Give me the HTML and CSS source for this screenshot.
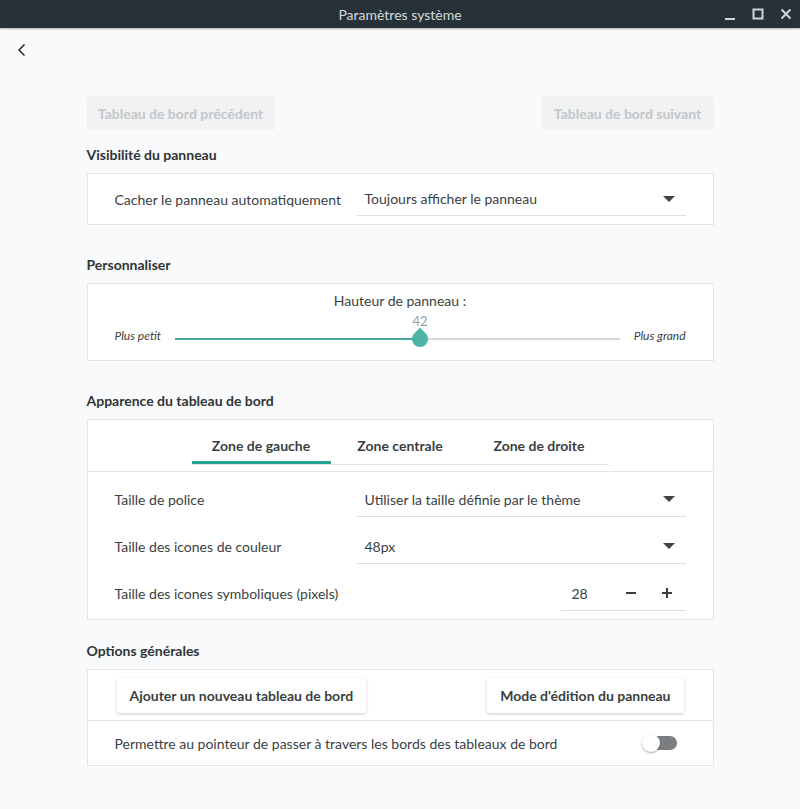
FILE: index.html
```html
<!DOCTYPE html>
<html lang="fr">
<head>
    <meta charset="UTF-8">
    <title>Paramètres système</title>
    <link rel="stylesheet" href="styles.css">
</head>
<body>
    <div class="titlebar">
        <span class="title">Paramètres système</span>
        <div class="win-buttons">
            <svg width="14" height="14" viewBox="0 0 14 14"><path d="M2 12h10" stroke="#cfd6da" stroke-width="2"/></svg>
            <svg width="14" height="14" viewBox="0 0 14 14"><rect x="2.5" y="2.5" width="9" height="9" fill="none" stroke="#cfd6da" stroke-width="2"/></svg>
            <svg width="14" height="14" viewBox="0 0 14 14"><path d="M2.5 2.5l9 9M11.5 2.5l-9 9" stroke="#cfd6da" stroke-width="2"/></svg>
        </div>
    </div>

    <div class="headerbar">
        <svg class="back" width="12" height="16" viewBox="0 0 12 16"><path d="M8.5 2.5L3 8l5.5 5.5" fill="none" stroke="#2f3437" stroke-width="1.6"/></svg>
    </div>

    <main class="content">
        <div class="nav-row">
            <button class="nav-btn prev" disabled>Tableau de bord précédent</button>
            <button class="nav-btn next" disabled>Tableau de bord suivant</button>
        </div>

        <h3 class="section-title first">Visibilité du panneau</h3>
        <div class="card">
            <div class="row row-combo">
                <span class="label">Cacher le panneau automatiquement</span>
                <div class="combo">
                    <span>Toujours afficher le panneau</span>
                    <span class="arrow"></span>
                </div>
            </div>
        </div>

        <h3 class="section-title">Personnaliser</h3>
        <div class="card slider-card">
            <div class="slider-title">Hauteur de panneau :</div>
            <div class="slider-row">
                <span class="hint">Plus petit</span>
                <div class="slider">
                    <div class="track"></div>
                    <div class="fill" style="width: 245px;"></div>
                    <span class="value" style="left: 245px;">42</span>
                    <div class="thumb" style="left: 245px;"></div>
                </div>
                <span class="hint">Plus grand</span>
            </div>
        </div>

        <h3 class="section-title">Apparence du tableau de bord</h3>
        <div class="card">
            <div class="tabs-bar">
                <div class="tabs">
                    <div class="tab active">Zone de gauche</div>
                    <div class="tab">Zone centrale</div>
                    <div class="tab">Zone de droite</div>
                </div>
            </div>
            <div class="rows">
                <div class="row">
                    <span class="label">Taille de police</span>
                    <div class="combo">
                        <span>Utiliser la taille définie par le thème</span>
                        <span class="arrow"></span>
                    </div>
                </div>
                <div class="row">
                    <span class="label">Taille des icones de couleur</span>
                    <div class="combo">
                        <span>48px</span>
                        <span class="arrow"></span>
                    </div>
                </div>
                <div class="row">
                    <span class="label">Taille des icones symboliques (pixels)</span>
                    <div class="spin">
                        <span class="spin-value">28</span>
                        <span class="spin-btn">
                            <svg width="12" height="12" viewBox="0 0 12 12"><path d="M1 6h10" stroke="#3a3f43" stroke-width="2"/></svg>
                        </span>
                        <span class="spin-btn">
                            <svg width="12" height="12" viewBox="0 0 12 12"><path d="M1 6h10M6 1v10" stroke="#3a3f43" stroke-width="2"/></svg>
                        </span>
                    </div>
                </div>
            </div>
        </div>

        <h3 class="section-title tight">Options générales</h3>
        <div class="card">
            <div class="buttons-row">
                <button class="btn">Ajouter un nouveau tableau de bord</button>
                <button class="btn">Mode d'édition du panneau</button>
            </div>
            <div class="row toggle-row">
                <span class="label">Permettre au pointeur de passer à travers les bords des tableaux de bord</span>
                <span class="switch"><span class="knob"></span></span>
            </div>
        </div>
    </main>
</body>
</html>
```

FILE: styles.css
```css
body {
    margin: 0;
    background-color: #f9fafb;
    font-family: Lato, "Noto Sans", sans-serif;
    font-size: 14px;
    color: #3a3f43;
    height: 809px;
    overflow: hidden;
}

.titlebar {
    height: 28px;
    background-color: #263238;
    position: relative;
    display: flex;
    align-items: center;
    justify-content: center;
    box-shadow: 0 1px 2px rgba(0, 0, 0, 0.3);
}

.titlebar .title {
    color: #d4dadd;
    font-size: 14px;
}

.win-buttons {
    position: absolute;
    right: 7px;
    top: 7px;
    display: flex;
    gap: 14px;
}

.headerbar {
    height: 40px;
    display: flex;
    align-items: center;
    padding-left: 16px;
    box-sizing: border-box;
    padding-top: 4px;
}

.content {
    width: 627px;
    margin: 28px auto 0;
}

.nav-row {
    display: flex;
    justify-content: space-between;
}

.nav-btn {
    height: 34px;
    border: none;
    border-radius: 2px;
    background-color: #f1f2f3;
    color: #c3c7ca;
    font-family: inherit;
    font-weight: bold;
    font-size: 14px;
    padding: 0;
    white-space: nowrap;
}

.nav-btn.prev {
    width: 188px;
}

.nav-btn.next {
    width: 172px;
}

.section-title {
    margin: 31px 0 9px;
    font-size: 14px;
    line-height: 18px;
    font-weight: bold;
    color: #2f3437;
}

.section-title.first {
    margin-top: 16px;
}

.section-title.tight {
    margin-top: 22px;
}

.card {
    background-color: #ffffff;
    border: 1px solid #e3e5e7;
}

.row {
    height: 47px;
    display: flex;
    align-items: center;
    justify-content: space-between;
    padding: 0 27px;
}

.row-combo {
    height: 50px;
}

.combo {
    box-sizing: border-box;
    width: 329px;
    height: 34px;
    border-bottom: 1px solid #dcdfe1;
    display: flex;
    align-items: center;
    justify-content: space-between;
    padding: 0 11px 0 8px;
}

.arrow {
    width: 0;
    height: 0;
    border-left: 6px solid transparent;
    border-right: 6px solid transparent;
    border-top: 6px solid #3f4448;
}

.slider-card {
    height: 76px;
    padding: 0 27px;
}

.slider-title {
    text-align: center;
    margin-top: 8px;
    line-height: 18px;
}

.slider-row {
    display: flex;
    align-items: center;
    margin-top: 18px;
}

.hint {
    font-style: italic;
    font-size: 12px;
    color: #3a3f43;
}

.slider {
    position: relative;
    flex: 1;
    height: 8px;
    margin: 6px 14px 0 14px;
}

.slider .track {
    position: absolute;
    left: 0;
    right: 0;
    top: 3px;
    height: 2px;
    background-color: #d5d8da;
}

.slider .fill {
    position: absolute;
    left: 0;
    top: 3px;
    height: 2px;
    background-color: #49ab9f;
}

.slider .thumb {
    position: absolute;
    top: -4px;
    width: 16px;
    height: 16px;
    margin-left: -8px;
    background-color: #4db3a7;
    border-radius: 50% 0 50% 50%;
    transform: rotate(-45deg);
}

.slider .value {
    position: absolute;
    top: -22px;
    transform: translateX(-50%);
    color: #9a9ea1;
    font-size: 13px;
}

.tabs-bar {
    height: 51px;
    border-bottom: 1px solid #e3e5e7;
    display: flex;
    justify-content: center;
}

.tabs {
    display: flex;
    height: 44px;
    border-bottom: 1px solid #e0e3e5;
}

.tab {
    width: 139px;
    text-align: center;
    font-weight: bold;
    line-height: 52px;
    height: 44px;
    color: #3a3f43;
}

.tab.active {
    border-bottom: 3px solid #26a091;
    height: 41px;
}

.rows {
    padding: 4px 0 2px;
}

.spin {
    box-sizing: border-box;
    width: 125px;
    height: 34px;
    border-bottom: 1px solid #dcdfe1;
    display: flex;
    align-items: center;
    padding-left: 11px;
}

.spin-value {
    width: 41px;
}

.spin-btn {
    width: 36px;
    display: flex;
    justify-content: center;
}

.buttons-row {
    height: 50px;
    border-bottom: 1px solid #e3e5e7;
    display: flex;
    align-items: center;
    justify-content: space-between;
    padding: 0 29px;
}

.btn {
    height: 35px;
    border: none;
    border-radius: 2px;
    background-color: #ffffff;
    box-shadow: 0 1px 3px rgba(0, 0, 0, 0.22);
    font-family: inherit;
    font-weight: bold;
    font-size: 14px;
    color: #3a3f43;
    padding: 0 13px;
}

.toggle-row {
    height: 44px;
    padding-right: 36px;
}

.switch {
    position: relative;
    width: 32px;
    height: 14px;
    border-radius: 7px;
    background-color: #7c7f81;
}

.knob {
    position: absolute;
    left: -3px;
    top: -2px;
    width: 18px;
    height: 18px;
    border-radius: 50%;
    background-color: #ffffff;
    box-shadow: 0 1px 2px rgba(0, 0, 0, 0.35);
}
```
